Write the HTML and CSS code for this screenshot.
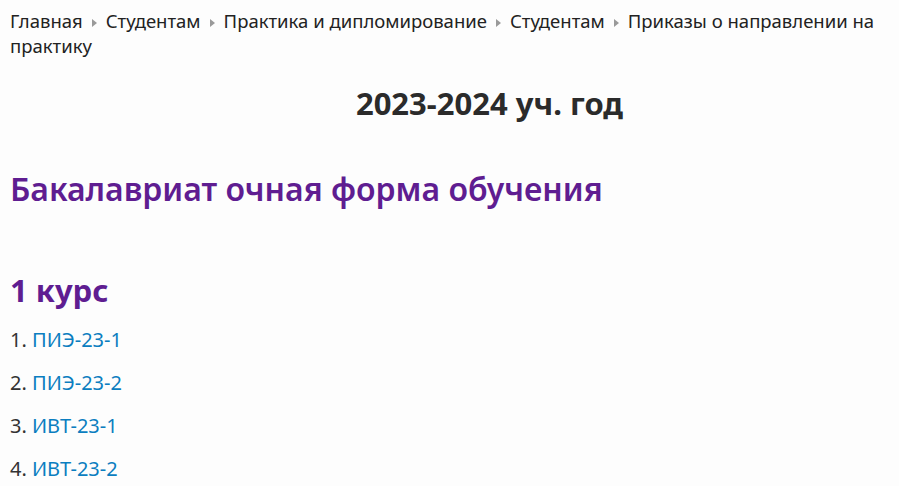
FILE: index.html
```html
<!DOCTYPE html>
<html lang="ru">
<head>
<meta charset="utf-8">
<link rel="stylesheet" href="styles.css">
</head>
<body>
<div class="page">
  <ol class="crumbs"><li class="crumb"><a href="#">Главная</a></li><li class="crumb"><a href="#">Студентам</a></li><li class="crumb"><a href="#">Практика и дипломирование</a></li><li class="crumb"><a href="#">Студентам</a></li><li class="crumb"><span>Приказы о направлении на </span><span>практику</span></li></ol>
  <h1 class="year">2023-2024 уч. год</h1>
  <h2 class="form">Бакалавриат очная форма обучения</h2>
  <h3 class="course">1 курс</h3>
  <div class="list">
    <p class="item">1. <a href="#">ПИЭ-23-1</a></p>
    <p class="item">2. <a href="#">ПИЭ-23-2</a></p>
    <p class="item">3. <a href="#">ИВТ-23-1</a></p>
    <p class="item">4. <a href="#">ИВТ-23-2</a></p>
  </div>
</div>
</body>
</html>
```
FILE: styles.css
```css
html, body {
  margin: 0;
  padding: 0;
  background: #fdfdfd;
}
body {
  font-family: "Noto Sans", "Open Sans", sans-serif;
  color: #2b2b2b;
}
.page {
  padding: 8px 10px 0 10px;
}
.crumbs {
  list-style: none;
  margin: 0;
  padding: 0;
  font-size: 18.5px;
  line-height: 25px;
  color: #222;
}
.crumb {
  display: inline;
}
.crumb a {
  color: #222;
  text-decoration: none;
}
.crumb + .crumb::before {
  content: "";
  display: inline-block;
  width: 0;
  height: 0;
  border-top: 4px solid transparent;
  border-bottom: 4px solid transparent;
  border-left: 5px solid #9a9a9a;
  margin: 0 9px 1px 9px;
}
.year {
  text-align: center;
  font-size: 31px;
  font-weight: 700;
  margin: 25px 0 0 0;
  padding-left: 80px;
  line-height: 40px;
  color: #2b2b2b;
}
.form {
  font-size: 32px;
  font-weight: 600;
  color: #5f1d91;
  margin: 46px 0 0 0;
  line-height: 40px;
}
.course {
  font-size: 31px;
  font-weight: 700;
  color: #5f1d91;
  margin: 61px 0 0 0;
  line-height: 40px;
}
.list {
  margin-top: 8px;
}
.item {
  font-size: 20px;
  margin: 0;
  line-height: 43px;
  color: #333;
}
.item a {
  color: #0b7ec0;
  text-decoration: none;
}
```
